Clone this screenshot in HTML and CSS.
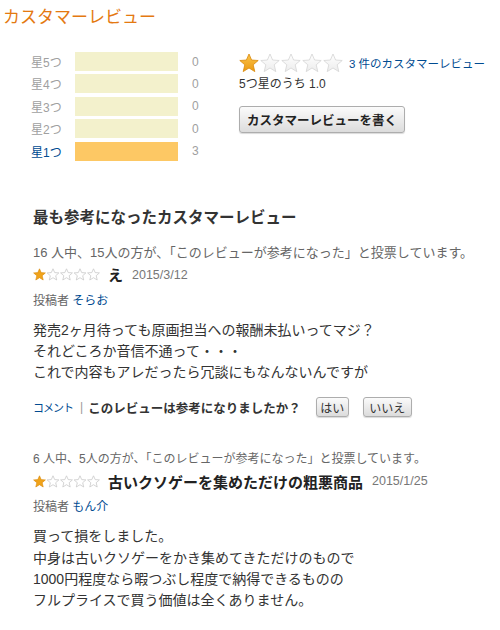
FILE: index.html
```html
<!DOCTYPE html>
<html lang="ja">
<head>
<meta charset="utf-8">
<title>カスタマーレビュー</title>
<link rel="stylesheet" href="styles.css">
</head>
<body>
<div class="page">
  <h2 class="title">カスタマーレビュー</h2>

  <div class="summary">
    <div class="histogram">
      <div class="hist-row"><span class="hist-label">星5つ</span><span class="bar"></span><span class="count">0</span></div>
      <div class="hist-row"><span class="hist-label">星4つ</span><span class="bar"></span><span class="count">0</span></div>
      <div class="hist-row"><span class="hist-label">星3つ</span><span class="bar"></span><span class="count">0</span></div>
      <div class="hist-row"><span class="hist-label">星2つ</span><span class="bar"></span><span class="count">0</span></div>
      <div class="hist-row"><span class="hist-label link">星1つ</span><span class="bar bar-full"></span><span class="count">3</span></div>
    </div>

    <div class="overall">
      <div class="overall-stars">
        <svg class="big-stars" width="104" height="20" viewBox="0 0 104 20">
          <defs>
            <linearGradient id="gold" x1="0" y1="0" x2="0" y2="1">
              <stop offset="0" stop-color="#fbc44a"/>
              <stop offset="1" stop-color="#eb9a12"/>
            </linearGradient>
            <linearGradient id="grey" x1="0" y1="0" x2="0" y2="1">
              <stop offset="0" stop-color="#ffffff"/>
              <stop offset="1" stop-color="#ececec"/>
            </linearGradient>
            <polygon id="bigstar" points="10,1 12.6,7 19.2,7.5 14.2,11.8 15.8,18.6 10,15 4.2,18.6 5.8,11.8 0.8,7.5 7.4,7"/>
          </defs>
          <use href="#bigstar" x="0" fill="url(#gold)" stroke="#d9890a" stroke-width="0.8"/>
          <use href="#bigstar" x="21" fill="url(#grey)" stroke="#d4d4d4" stroke-width="0.8"/>
          <use href="#bigstar" x="42" fill="url(#grey)" stroke="#d4d4d4" stroke-width="0.8"/>
          <use href="#bigstar" x="63" fill="url(#grey)" stroke="#d4d4d4" stroke-width="0.8"/>
          <use href="#bigstar" x="84" fill="url(#grey)" stroke="#d4d4d4" stroke-width="0.8"/>
        </svg>
        <a class="link review-count">3 件のカスタマーレビュー</a>
      </div>
      <div class="rating-text">5つ星のうち 1.0</div>
      <button class="btn write-btn">カスタマーレビューを書く</button>
    </div>
  </div>

  <h3 class="section-heading">最も参考になったカスタマーレビュー</h3>

  <div class="review review-first">
    <div class="meta">16 人中、15人の方が、「このレビューが参考になった」と投票しています。</div>
    <div class="review-head">
      <svg class="small-stars" width="68" height="13" viewBox="0 0 68 13">
        <defs>
          <polygon id="smstar" points="6.5,0.8 8.2,4.6 12.4,4.9 9.2,7.7 10.2,12 6.5,9.7 2.8,12 3.8,7.7 0.6,4.9 4.8,4.6"/>
        </defs>
        <use href="#smstar" x="0" fill="#f0a31a" stroke="#d8880a" stroke-width="0.6"/>
        <use href="#smstar" x="13.5" fill="#fff" stroke="#c9c9c9" stroke-width="0.8"/>
        <use href="#smstar" x="27" fill="#fff" stroke="#c9c9c9" stroke-width="0.8"/>
        <use href="#smstar" x="40.5" fill="#fff" stroke="#c9c9c9" stroke-width="0.8"/>
        <use href="#smstar" x="54" fill="#fff" stroke="#c9c9c9" stroke-width="0.8"/>
      </svg>
      <span class="review-title">え</span>
      <span class="date">2015/3/12</span>
    </div>
    <div class="byline">投稿者 <a class="link">そらお</a></div>
    <div class="body">
      <p>発売2ヶ月待っても原画担当への報酬未払いってマジ？</p>
      <p>それどころか音信不通って・・・</p>
      <p>これで内容もアレだったら冗談にもなんないんですが</p>
    </div>
    <div class="actions">
      <a class="link comment-link">コメント</a>
      <span class="sep">|</span>
      <span class="question">このレビューは参考になりましたか？</span>
      <button class="btn vote-btn vote-yes">はい</button>
      <button class="btn vote-btn vote-no">いいえ</button>
    </div>
  </div>

  <div class="review review-second">
    <div class="meta">6 人中、5人の方が、「このレビューが参考になった」と投票しています。</div>
    <div class="review-head">
      <svg class="small-stars" width="68" height="13" viewBox="0 0 68 13">
        <use href="#smstar" x="0" fill="#f0a31a" stroke="#d8880a" stroke-width="0.6"/>
        <use href="#smstar" x="13.5" fill="#fff" stroke="#c9c9c9" stroke-width="0.8"/>
        <use href="#smstar" x="27" fill="#fff" stroke="#c9c9c9" stroke-width="0.8"/>
        <use href="#smstar" x="40.5" fill="#fff" stroke="#c9c9c9" stroke-width="0.8"/>
        <use href="#smstar" x="54" fill="#fff" stroke="#c9c9c9" stroke-width="0.8"/>
      </svg>
      <span class="review-title">古いクソゲーを集めただけの粗悪商品</span>
      <span class="date">2015/1/25</span>
    </div>
    <div class="byline">投稿者 <a class="link">もん介</a></div>
    <div class="body">
      <p>買って損をしました。</p>
      <p>中身は古いクソゲーをかき集めてきただけのもので</p>
      <p>1000円程度なら暇つぶし程度で納得できるものの</p>
      <p>フルプライスで買う価値は全くありません。</p>
    </div>
  </div>
</div>
</body>
</html>
```

FILE: styles.css
```css
html, body {
  margin: 0;
  padding: 0;
  background: #ffffff;
}

body {
  font-family: "Liberation Sans", "Noto Sans CJK JP", sans-serif;
  color: #333333;
}

.page {
  width: 500px;
  height: 630px;
  overflow: hidden;
  padding: 0 0 0 3px;
  box-sizing: border-box;
}

.title {
  margin: 8px 0 0 0;
  font-size: 17px;
  line-height: 20px;
  font-weight: normal;
  color: #e47911;
}

.link {
  color: #004b91;
  text-decoration: none;
}

/* summary */
.summary {
  display: flex;
  margin-top: 24px;
}

.histogram {
  display: flex;
  flex-direction: column;
  gap: 3.4px;
  padding-left: 28px;
  width: 206px;
}

.hist-row {
  display: flex;
  align-items: center;
  height: 19px;
}

.hist-label {
  width: 44px;
  font-size: 12px;
  color: #a0a0a0;
}

.hist-label.link {
  color: #004b91;
}

.bar {
  width: 103px;
  height: 19px;
  background: #f3f1cc;
}

.bar-full {
  background: #fdc864;
}

.count {
  margin-left: 14px;
  font-size: 12px;
  color: #a0a0a0;
}

.overall {
  display: flex;
  flex-direction: column;
  align-items: flex-start;
  padding-left: 2px;
}

.overall-stars {
  display: flex;
  align-items: center;
  gap: 6px;
  height: 22px;
}

.big-stars {
  display: block;
}

.review-count {
  font-size: 11.5px;
}

.rating-text {
  font-size: 12px;
  line-height: 16px;
  margin-top: 2px;
  color: #333333;
}

.btn {
  font-family: "Liberation Sans", "Noto Sans CJK JP", sans-serif;
  border: 1px solid #adadad;
  border-radius: 3px;
  background: linear-gradient(#fbfbfb, #dcdcdc);
  box-shadow: 0 1px 1px rgba(0, 0, 0, 0.15);
  color: #222222;
  padding: 0;
  cursor: pointer;
}

.write-btn {
  margin-top: 14px;
  height: 27px;
  padding: 0 7px;
  font-size: 12.5px;
  font-weight: bold;
}

/* most helpful */
.section-heading {
  margin: 47px 0 0 30px;
  font-size: 15.5px;
  line-height: 20px;
  font-weight: bold;
  color: #333333;
}

.review {
  margin: 16px 0 0 30px;
}

.review-second {
  margin-top: 32px;
}

.meta {
  font-size: 12.5px;
  line-height: 18px;
  color: #666666;
}

.review-first .meta {
  font-size: 13px;
}

.review-second .meta {
  font-size: 12px;
}

.review-head {
  display: flex;
  align-items: center;
  height: 26px;
}

.small-stars {
  display: block;
  margin-right: 7px;
}

.review-title {
  font-size: 15px;
  font-weight: bold;
  color: #222222;
}

.date {
  margin-left: 9px;
  font-size: 12.5px;
  color: #777777;
}

.byline {
  margin-top: 3px;
  font-size: 12px;
  line-height: 20px;
  color: #666666;
}

.review-second .byline {
  margin-top: 3px;
}

.body {
  margin-top: 9px;
}

.body p {
  margin: 0;
  font-size: 14px;
  line-height: 21.3px;
  color: #333333;
}

.actions {
  display: flex;
  align-items: center;
  margin-top: 13px;
  height: 22px;
  font-size: 12px;
}

.comment-link {
  font-size: 11px;
  letter-spacing: -1px;
}

.sep {
  color: #999999;
  margin: 0 5px 0 7px;
}

.question {
  font-size: 12.5px;
  font-weight: bold;
  color: #333333;
  margin-right: 15px;
}

.vote-btn {
  height: 20px;
  font-size: 12px;
  color: #333333;
}

.vote-yes {
  width: 33px;
  margin-right: 14px;
}

.vote-no {
  width: 49px;
}
```
